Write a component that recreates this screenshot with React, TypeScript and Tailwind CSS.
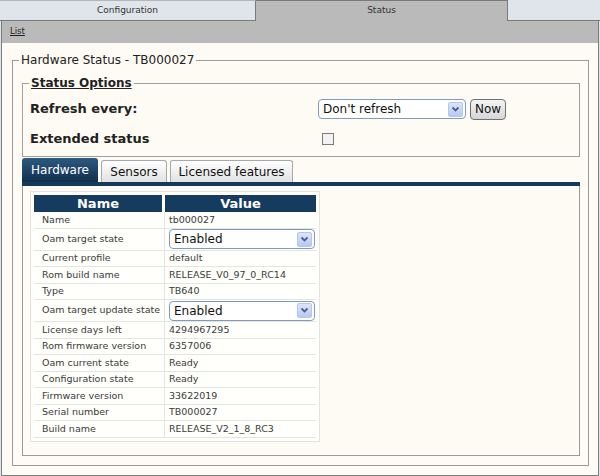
import React from "react";

interface Row {
  name: string;
  value: string;
  select?: boolean;
}

const rows: Row[] = [
  { name: "Name", value: "tb000027" },
  { name: "Oam target state", value: "Enabled", select: true },
  { name: "Current profile", value: "default" },
  { name: "Rom build name", value: "RELEASE_V0_97_0_RC14" },
  { name: "Type", value: "TB640" },
  { name: "Oam target update state", value: "Enabled", select: true },
  { name: "License days left", value: "4294967295" },
  { name: "Rom firmware version", value: "6357006" },
  { name: "Oam current state", value: "Ready" },
  { name: "Configuration state", value: "Ready" },
  { name: "Firmware version", value: "33622019" },
  { name: "Serial number", value: "TB000027" },
  { name: "Build name", value: "RELEASE_V2_1_8_RC3" },
];

// XP style drop down, drawn by hand so it looks the same everywhere
const FakeSelect = ({ value, className }: { value: string; className: string }) => (
  <div
    className={
      "flex items-center justify-between rounded-[4px] border border-[#7f9db9] bg-white pl-[4px] pr-[2px] " +
      className
    }
  >
    <span className="text-[#111]">{value}</span>
    <div className="flex h-[15px] w-[15px] items-center justify-center rounded-[2px] border border-[#b3c6ee] bg-gradient-to-b from-[#dce6fb] to-[#b6c9f4]">
      <svg width="9" height="7" viewBox="0 0 9 7">
        <path d="M1.5 1.5 L4.5 4.5 L7.5 1.5" fill="none" stroke="#4d6185" strokeWidth="1.8" />
      </svg>
    </div>
  </div>
);

const App = () => {
  return (
    <div className="h-[476px] w-[600px] overflow-hidden bg-[#dfe5ea] font-['DejaVu_Sans',sans-serif] text-[#222]">
      {/* top tabs */}
      <div className="flex h-[21px]">
        <div className="flex w-[256px] items-center justify-center border-t border-r border-b border-t-[#b0b6bc] border-r-[#7a7a7a] border-b-[#7a7a7a] bg-[#dfe5ea] text-[9px] text-[#333]">
          Configuration
        </div>
        <div className="flex w-[252px] items-center justify-center border-t border-r border-[#7a7a7a] bg-[#bababa] text-[9px] text-[#333]">
          Status
        </div>
        <div className="flex-1 border-b border-[#7a7a7a]" />
      </div>

      <div className="ml-[1px] h-[455px] w-[598px] border-x border-b border-[#7d7d7d]">
        <div className="h-[22px] bg-[#bababa] pl-[8px] text-[8.5px] leading-[20px] text-[#222]">
          <span className="underline">List</span>
        </div>

        <div className="h-[432px] bg-[#fdfbf3] pl-[10px] pr-[9px] pt-[9px]">
          <fieldset className="border border-[#9a9a9a] pl-[9px] pr-[8px] pt-[8px] pb-[9px]">
            <legend className="-ml-[3px] px-[2px] text-[12px] leading-[16px] text-[#222]">
              Hardware Status - TB000027
            </legend>

            {/* status options */}
            <fieldset className="border border-[#a0a0a0] pl-[7px] pt-[7px] pb-[6px]">
              <legend className="-ml-[1px] px-[2px] text-[12px] font-bold leading-[15px] text-[#222] underline">
                Status Options
              </legend>
              <div className="flex flex-col gap-[8px]">
                <div className="flex h-[22px] items-center">
                  <div className="w-[288px] text-[13px] font-bold">Refresh every:</div>
                  <FakeSelect value="Don't refresh" className="h-[20px] w-[148px] text-[12px]" />
                  <button className="ml-[4px] h-[21px] w-[36px] rounded-[4px] border border-[#6f6f6f] bg-gradient-to-b from-[#f4f4f4] to-[#d6d6d6] text-[12px] text-[#111]">
                    Now
                  </button>
                </div>
                <div className="flex h-[22px] items-center">
                  <div className="w-[292px] text-[13px] font-bold">Extended status</div>
                  <div className="h-[12px] w-[12px] border border-[#7a7a7a] bg-[#f3f3f3]" />
                </div>
              </div>
            </fieldset>

            {/* inner tabs */}
            <div className="mt-[1px] flex h-[24px] items-end gap-[3px]">
              <div className="flex h-[24px] w-[76px] items-center justify-center rounded-t-[3px] bg-gradient-to-b from-[#2e5a80] to-[#0f2f4e] text-[12px] text-white">
                Hardware
              </div>
              <div className="flex h-[22px] w-[66px] items-center justify-center rounded-t-[3px] border border-b-0 border-[#a8a8a8] bg-gradient-to-b from-white to-[#e2e2e2] text-[12px] text-[#111]">
                Sensors
              </div>
              <div className="flex h-[22px] w-[123px] items-center justify-center rounded-t-[3px] border border-b-0 border-[#a8a8a8] bg-gradient-to-b from-white to-[#e2e2e2] text-[12px] text-[#111]">
                Licensed features
              </div>
            </div>
            <div className="h-[4px] w-[558px] bg-[#15395a]" />

            <div className="h-[270px] w-[558px] border-x border-b border-[#9a9a9a] pt-[5px] pl-[7px]">
              <div className="w-[290px] border border-[#e3e3e3] bg-[#fffffb] p-[3px]">
                <div className="flex h-[17px] gap-[3px] text-[13px] font-bold leading-[17px] text-white">
                  <div className="w-[128px] bg-[#153b5e] text-center">Name</div>
                  <div className="flex-1 bg-[#153b5e] text-center">Value</div>
                </div>
                {rows.map((row, i) => (
                  <div
                    key={i}
                    className={
                      "flex border-b border-[#e4e4e4] text-[9.5px] text-[#3a3a3a] " +
                      (row.select ? "h-[22px]" : "h-[16.5px]")
                    }
                  >
                    <div className="flex w-[131px] items-center whitespace-nowrap border-r border-[#e4e4e4] pl-[8px]">
                      {row.name}
                    </div>
                    <div className="flex flex-1 items-center pl-[4px]">
                      {row.select ? (
                        <FakeSelect value={row.value} className="h-[20px] w-[146px] text-[12px]" />
                      ) : (
                        row.value
                      )}
                    </div>
                  </div>
                ))}
              </div>
            </div>
          </fieldset>
        </div>
      </div>
    </div>
  );
};

export default App;
